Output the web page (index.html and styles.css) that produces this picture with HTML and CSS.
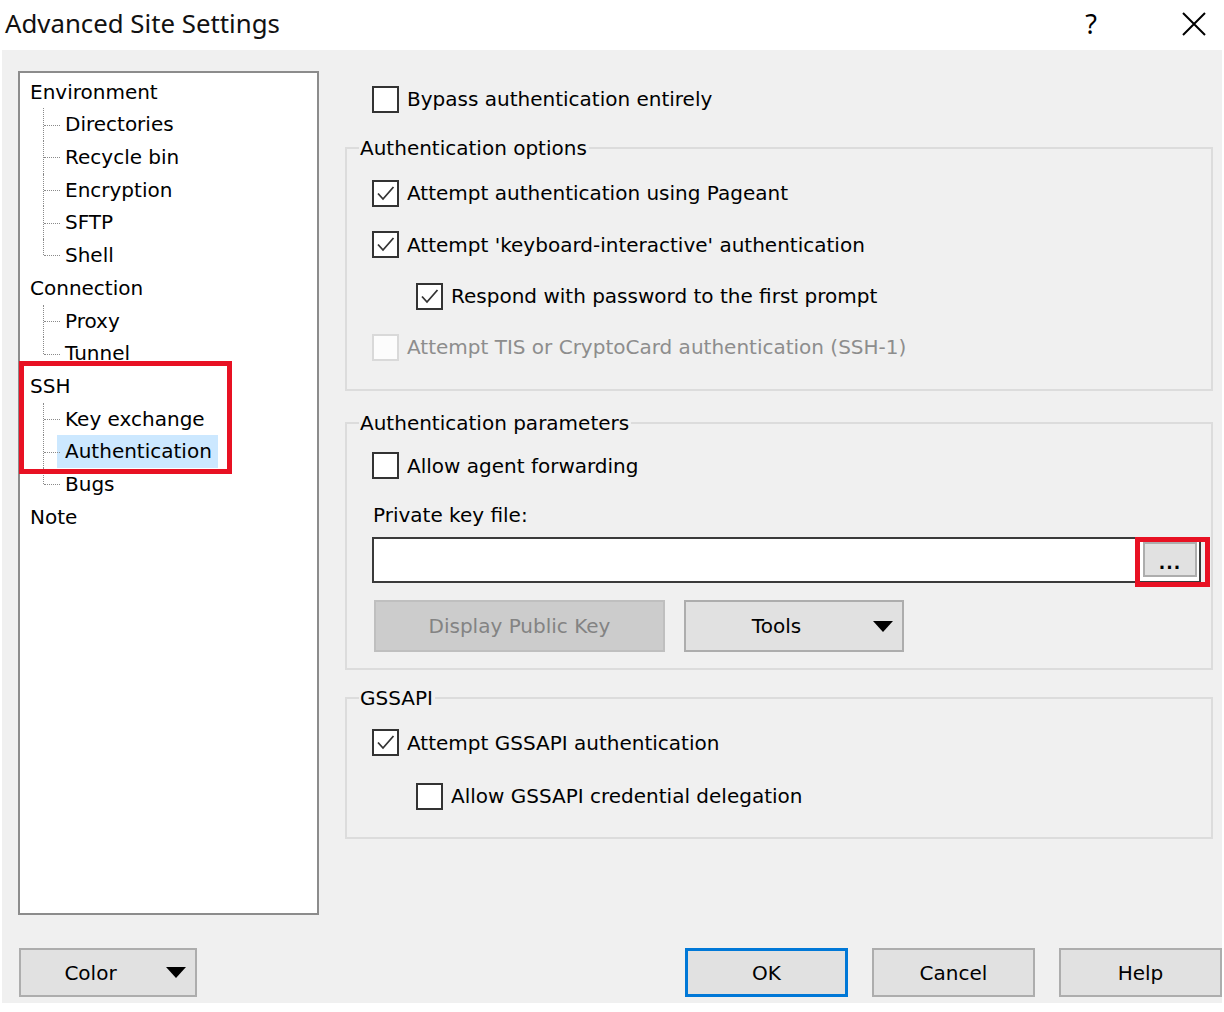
FILE: index.html
```html
<!DOCTYPE html>
<html>
<head>
	<meta charset="utf-8">
	<meta name="viewport" content="width=device-width, initial-scale=1">
	<title>Advanced Site Settings</title>
	<link rel="stylesheet" href="styles.css">
</head>
<body>
    <div class="window">
        <div class="titlebar">
            <span class="title">Advanced Site Settings</span>
            <span class="help-mark">?</span>
            <svg class="close" width="24" height="24" viewBox="0 0 24 24">
                <path d="M1 1 L23 23 M23 1 L1 23" stroke="#000" stroke-width="2" fill="none"/>
            </svg>
        </div>

        <div class="dialog">
            <div class="main">
                <div class="tree">
                    <ul class="roots">
                        <li class="root">Environment
                            <ul class="children">
                                <li class="node"><span class="label">Directories</span></li>
                                <li class="node"><span class="label">Recycle bin</span></li>
                                <li class="node"><span class="label">Encryption</span></li>
                                <li class="node"><span class="label">SFTP</span></li>
                                <li class="node"><span class="label">Shell</span></li>
                            </ul>
                        </li>
                        <li class="root">Connection
                            <ul class="children">
                                <li class="node"><span class="label">Proxy</span></li>
                                <li class="node"><span class="label">Tunnel</span></li>
                            </ul>
                        </li>
                        <li class="root">SSH
                            <ul class="children">
                                <li class="node"><span class="label">Key exchange</span></li>
                                <li class="node selected"><span class="label">Authentication</span></li>
                                <li class="node"><span class="label">Bugs</span></li>
                            </ul>
                        </li>
                        <li class="root">Note</li>
                    </ul>
                    <div class="mark mark-tree"></div>
                </div>

                <div class="pages">
                    <label class="check first">
                        <span class="box"></span>Bypass authentication entirely
                    </label>

                    <fieldset class="group group-options">
                        <legend>Authentication options</legend>
                        <label class="check">
                            <span class="box"><svg viewBox="0 0 23 23"><path d="M4 11.5 L9 17 L19.5 5" /></svg></span>Attempt authentication using Pageant
                        </label>
                        <label class="check">
                            <span class="box"><svg viewBox="0 0 23 23"><path d="M4 11.5 L9 17 L19.5 5" /></svg></span>Attempt 'keyboard-interactive' authentication
                        </label>
                        <label class="check nested">
                            <span class="box"><svg viewBox="0 0 23 23"><path d="M4 11.5 L9 17 L19.5 5" /></svg></span>Respond with password to the first prompt
                        </label>
                        <label class="check disabled">
                            <span class="box"></span>Attempt TIS or CryptoCard authentication (SSH-1)
                        </label>
                    </fieldset>

                    <fieldset class="group group-params">
                        <legend>Authentication parameters</legend>
                        <label class="check">
                            <span class="box"></span>Allow agent forwarding
                        </label>
                        <div class="field-label">Private key file:</div>
                        <div class="keyfile">
                            <button class="btn browse">...</button>
                            <div class="mark mark-browse"></div>
                        </div>
                        <div class="key-buttons">
                            <button class="btn btn-disabled public-key">Display Public Key</button>
                            <button class="btn split tools"><span class="split-text">Tools</span><span class="arrow"></span></button>
                        </div>
                    </fieldset>

                    <fieldset class="group group-gss">
                        <legend>GSSAPI</legend>
                        <label class="check">
                            <span class="box"><svg viewBox="0 0 23 23"><path d="M4 11.5 L9 17 L19.5 5" /></svg></span>Attempt GSSAPI authentication
                        </label>
                        <label class="check nested second">
                            <span class="box"></span>Allow GSSAPI credential delegation
                        </label>
                    </fieldset>
                </div>
            </div>

            <div class="footer">
                <button class="btn split color"><span class="split-text">Color</span><span class="arrow"></span></button>
                <button class="btn action default">OK</button>
                <button class="btn action">Cancel</button>
                <button class="btn action">Help</button>
            </div>
        </div>
    </div>
</body>
</html>
```

FILE: styles.css
```css
body {
    margin: 0;
    background: #fff;
    font-family: "DejaVu Sans", sans-serif;
    font-size: 20px;
    color: #000;
}
.window {
    width: 1224px;
    height: 1012px;
    overflow: hidden;
}
.titlebar {
    height: 50px;
    display: flex;
    align-items: center;
}
.title {
    margin: -4px 0 0 5px;
    font-family: "Noto Sans", sans-serif;
    font-size: 25.8px;
    color: #111;
}
.help-mark {
    margin: -4px 85px 0 auto;
    font-family: "Noto Sans", sans-serif;
    font-size: 27px;
}
.close {
    margin: -2px 18px 0 0;
}

.dialog {
    margin: 0 2px;
    height: 953px;
    background: #f0f0f0;
}
.main {
    display: flex;
    padding: 21px 0 0 16px;
}

/* tree */
.tree {
    position: relative;
    box-sizing: border-box;
    width: 301px;
    height: 844px;
    border: 2px solid #8c8c8c;
    background: #fff;
    padding: 2.6px 0 0 10px;
}
.tree ul {
    list-style: none;
    margin: 0;
    padding: 0;
}
.root {
    line-height: 32.7px;
}
.node {
    position: relative;
    padding-left: 35px;
}
.node::before {
    content: '';
    position: absolute;
    left: 13px;
    top: 0;
    height: 100%;
    border-left: 1px dotted #8a8a8a;
}
.node:last-child::before {
    height: 50%;
}
.node::after {
    content: '';
    position: absolute;
    left: 14px;
    top: 50%;
    width: 16px;
    border-top: 1px dotted #8a8a8a;
}
.label {
    display: inline-block;
    padding: 0 6px 0 8px;
    margin-left: -8px;
}
.selected .label {
    background: #cce8ff;
}

.mark {
    position: absolute;
    box-sizing: border-box;
    border: 5px solid #e81123;
}
.mark-tree {
    left: -1px;
    top: 288px;
    width: 213px;
    height: 113px;
}

/* right side */
.pages {
    margin-left: 26px;
    width: 868px;
    padding-top: 2.5px;
}
.check {
    display: flex;
    align-items: center;
    height: 51.3px;
}
.check.first {
    padding-left: 27px;
}
.check.nested {
    padding-left: 44px;
}
.check.second {
    margin-top: 2px;
}
.box {
    box-sizing: border-box;
    width: 27px;
    height: 27px;
    flex-shrink: 0;
    margin-right: 8px;
    border: 2px solid #333;
    background: #fff;
}
.box svg {
    display: block;
    width: 23px;
    height: 23px;
}
.box path {
    fill: none;
    stroke: #333;
    stroke-width: 1.8;
}
.disabled {
    color: #8d8d8d;
}
.disabled .box {
    border-color: #d9d9d9;
    background: #fcfcfc;
}

.group {
    margin: 0;
    min-width: 0;
    border: 2px solid #dcdcdc;
    padding: 7px 0 16px 25px;
}
.group legend {
    margin-left: -13px;
    padding: 0 2px 0 1px;
    line-height: 26px;
}
.group-options {
    margin-top: 10px;
}
.group-params {
    margin-top: 19px;
    padding-top: 4px;
}
.group-gss {
    margin-top: 15px;
    padding-top: 6px;
    padding-bottom: 15px;
}

.field-label {
    line-height: 26px;
    margin-top: 11px;
    padding-left: 1px;
}
.keyfile {
    position: relative;
    box-sizing: border-box;
    display: flex;
    width: 829px;
    height: 46px;
    margin-top: 9px;
    border: 2px solid #3a3a3a;
    background: #fff;
}
.mark-browse {
    left: 761px;
    top: -2px;
    width: 75px;
    height: 50px;
}

.btn {
    box-sizing: border-box;
    font-family: inherit;
    font-size: 20px;
    color: #000;
    background: #e1e1e1;
    border: 2px solid #adadad;
    padding: 0;
}
.browse {
    width: 54px;
    height: 35px;
    margin: 3px 2px 0 auto;
    line-height: 30px;
    padding-top: 4px;
    font-size: 17px;
    font-weight: bold;
    letter-spacing: 1px;
}
.key-buttons {
    display: flex;
    margin-top: 17px;
    padding-left: 2px;
}
.public-key {
    width: 291px;
    height: 52px;
}
.btn-disabled {
    background: #cccccc;
    border-color: #bfbfbf;
    color: #838383;
}
.tools {
    width: 220px;
    height: 52px;
    margin-left: 19px;
}
.split {
    display: flex;
    align-items: center;
}
.split-text {
    flex: 1;
    text-align: center;
}
.arrow {
    width: 0;
    height: 0;
    border-left: 10px solid transparent;
    border-right: 10px solid transparent;
    border-top: 11px solid #000;
    margin: 0 9px 0 6px;
}

/* footer */
.footer {
    display: flex;
    gap: 24px;
    padding: 33px 0 0 17px;
}
.color {
    width: 178px;
    height: 49px;
}
.action {
    width: 163px;
    height: 49px;
}
.footer .default {
    margin-left: auto;
    border: 3px solid #0078d7;
}
```
